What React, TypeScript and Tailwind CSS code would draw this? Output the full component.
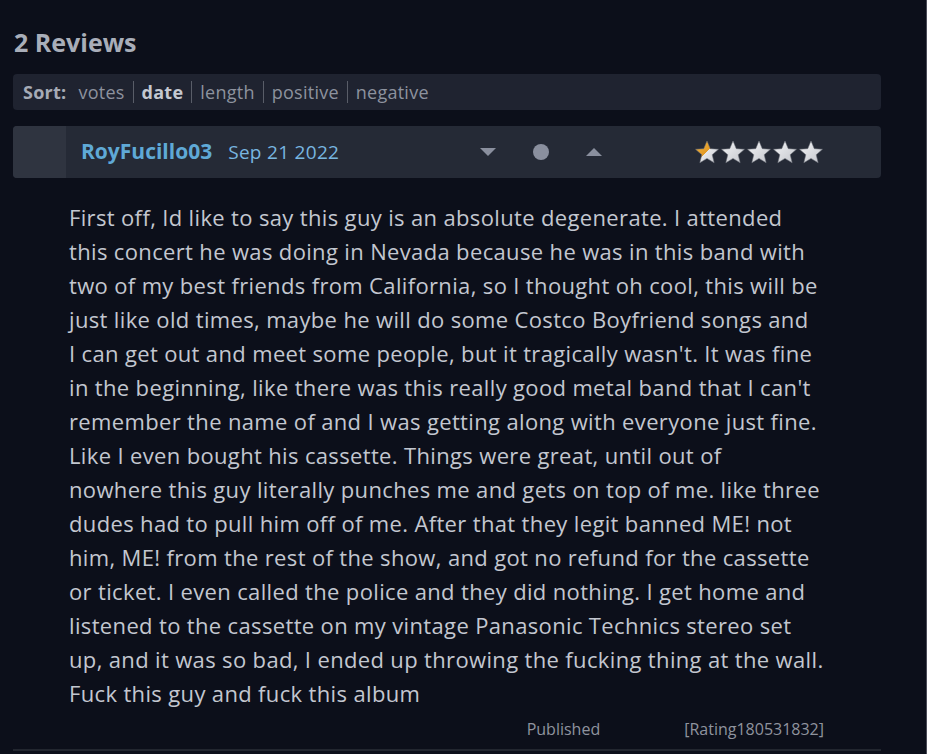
import React from "react";

const lines = [
    "First off, Id like to say this guy is an absolute degenerate. I attended",
    "this concert he was doing in Nevada because he was in this band with",
    "two of my best friends from California, so I thought oh cool, this will be",
    "just like old times, maybe he will do some Costco Boyfriend songs and",
    "I can get out and meet some people, but it tragically wasn't. It was fine",
    "in the beginning, like there was this really good metal band that I can't",
    "remember the name of and I was getting along with everyone just fine.",
    "Like I even bought his cassette. Things were great, until out of",
    "nowhere this guy literally punches me and gets on top of me. like three",
    "dudes had to pull him off of me. After that they legit banned ME! not",
    "him, ME! from the rest of the show, and got no refund for the cassette",
    "or ticket. I even called the police and they did nothing. I get home and",
    "listened to the cassette on my vintage Panasonic Technics stereo set",
    "up, and it was so bad, I ended up throwing the fucking thing at the wall.",
    "Fuck this guy and fuck this album",
];

function Star({ fill }: { fill: "half" | "none" }) {
    const id = fill === "half" ? "g-half" : "g-none";
    return (
        <svg width="26" height="26" viewBox="0 0 24 24">
            <defs>
                <linearGradient id={id} x1="0" y1="0" x2="1" y2="1">
                    {fill === "half" ? (
                        <>
                            <stop offset="0" stopColor="#f0b53f" />
                            <stop offset="0.5" stopColor="#e39a25" />
                            <stop offset="0.5" stopColor="#e6e7ea" />
                            <stop offset="1" stopColor="#c9cbd0" />
                        </>
                    ) : (
                        <>
                            <stop offset="0" stopColor="#f4f5f7" />
                            <stop offset="1" stopColor="#c3c5cb" />
                        </>
                    )}
                </linearGradient>
            </defs>
            <path
                d="M12 1.8l3 7.1 7.6.6-5.8 5 1.8 7.4L12 17.9l-6.6 4 1.8-7.4-5.8-5 7.6-.6z"
                fill={`url(#${id})`}
                stroke="#6e717a"
                strokeWidth="0.5"
            />
        </svg>
    );
}

function Sep() {
    return <span className="mx-[8px] w-px h-[22px] bg-[#595d68]" />;
}

export default function App() {
    const font = { fontFamily: "'Open Sans', Lato, sans-serif" };
    return (
        <div className="min-h-[754px] w-[927px] bg-[#0c0f1a] border-r border-[#4a4b57]" style={font}>
            <div className="w-[868px] ml-[13px] pt-[25px]">
                <h2 className="text-[25px] font-bold text-[#a9aeb9] pl-px leading-[34px]">2 Reviews</h2>

                {/* Sort bar */}
                <div className="mt-[15px] h-[36px] rounded-[4px] bg-[#1f2330] flex items-center px-[10px] text-[18px] tracking-[0.25px] text-[#8d929e]">
                    <span className="font-bold text-[#a6abb6] mr-[12px]">Sort:</span>
                    <span>votes</span>
                    <Sep />
                    <span className="font-bold text-[#c4c8d0]">date</span>
                    <Sep />
                    <span>length</span>
                    <Sep />
                    <span>positive</span>
                    <Sep />
                    <span>negative</span>
                </div>

                {/* Review header */}
                <div className="mt-[16px] h-[52px] rounded-[4px] bg-[#252a36] flex items-center overflow-hidden">
                    <div className="w-[53px] h-full bg-[#2f3440]" />
                    <span className="ml-[15px] text-[21px] font-bold text-[#5fa9d6]">RoyFucillo03</span>
                    <span className="ml-[16px] text-[19px] tracking-[0.3px] text-[#78b6e0]">Sep 21 2022</span>
                    <div className="ml-auto flex items-center w-[122px] justify-between mr-[92px]">
                        <svg width="16" height="9" viewBox="0 0 16 9">
                            <path d="M0 0h16L8 8z" fill="#8a8f9e" />
                        </svg>
                        <div className="w-[16px] h-[16px] rounded-full bg-[#8a8f9e]" />
                        <svg width="16" height="9" viewBox="0 0 16 9">
                            <path d="M0 8h16L8 0z" fill="#8a8f9e" />
                        </svg>
                    </div>
                    <div className="flex items-center mr-[57px]">
                        <Star fill="half" />
                        <Star fill="none" />
                        <Star fill="none" />
                        <Star fill="none" />
                        <Star fill="none" />
                    </div>
                </div>

                {/* Review body */}
                <div className="pl-[56px] pr-[57px] pt-[22px]">
                    <div className="text-[22px] leading-[34px] tracking-[0.35px] text-[#c3c7d0] whitespace-nowrap">
                        {lines.map((l, i) => (
                            <div key={i}>{l}</div>
                        ))}
                    </div>
                    <div className="flex justify-end items-center gap-[84px] mt-[7px] text-[16px] text-[#8f939e]">
                        <span>Published</span>
                        <span>[Rating180531832]</span>
                    </div>
                </div>
                <div className="mt-[8px] h-[2px] bg-[#22262f]" />
            </div>
        </div>
    );
}
